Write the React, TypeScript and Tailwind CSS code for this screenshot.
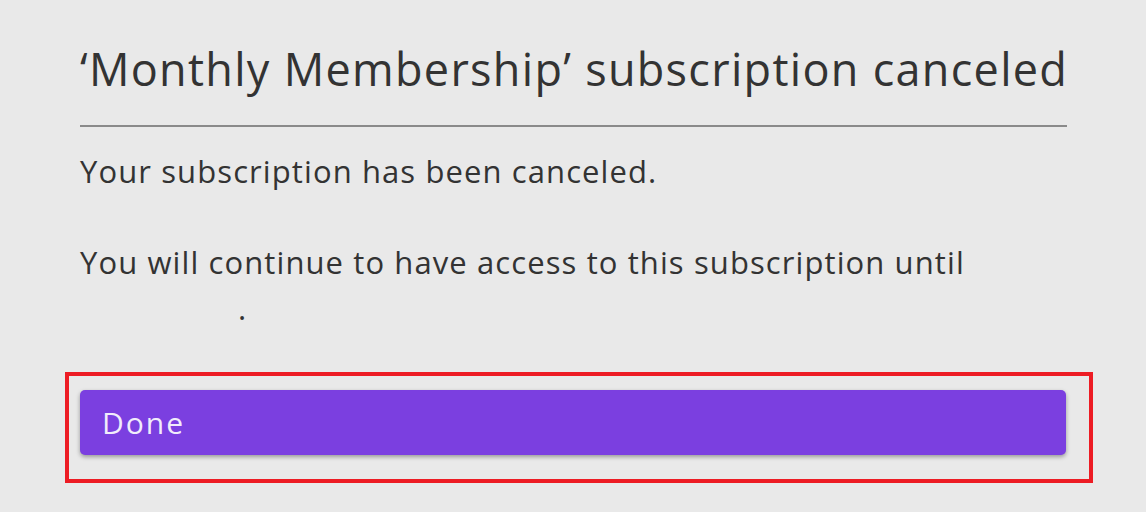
import React from 'react';

export default function App() {
  return (
    <div className="w-[1146px] h-[512px] overflow-hidden bg-[#e9e9e9] pt-[38px] font-['Open_Sans',sans-serif] text-[#333333]">
      <div className="ml-[80px] w-[987px]">
        <h1 className="text-[45px] leading-[62px] font-normal tracking-[1.3px] whitespace-nowrap">
          ‘Monthly Membership’ subscription canceled
        </h1>
        <div className="mt-[25px] h-[2px] bg-[#8a8a8a]" />
        <p className="mt-[23px] text-[31px] leading-[42px] tracking-[1.1px] whitespace-nowrap">
          Your subscription has been canceled.
        </p>
        <p className="mt-[49px] text-[31px] leading-[42px] tracking-[1.1px] whitespace-nowrap">
          You will continue to have access to this subscription until
        </p>
        <p className="mt-[4px] text-[31px] leading-[42px] pl-[158px]">.</p>
      </div>
      <div className="ml-[65px] mt-[43px] w-[1028px] h-[111px] border-[4px] border-[#ed1c24] pl-[11px] pt-[14px]">
        <button className="w-[986px] h-[65px] rounded-[5px] bg-[#7b3fe0] shadow-[0_2px_4px_rgba(0,0,0,0.35)] text-left pl-[22px] text-[30px] tracking-[2px] text-[#f1ecfb] font-medium">
          Done
        </button>
      </div>
    </div>
  );
}
